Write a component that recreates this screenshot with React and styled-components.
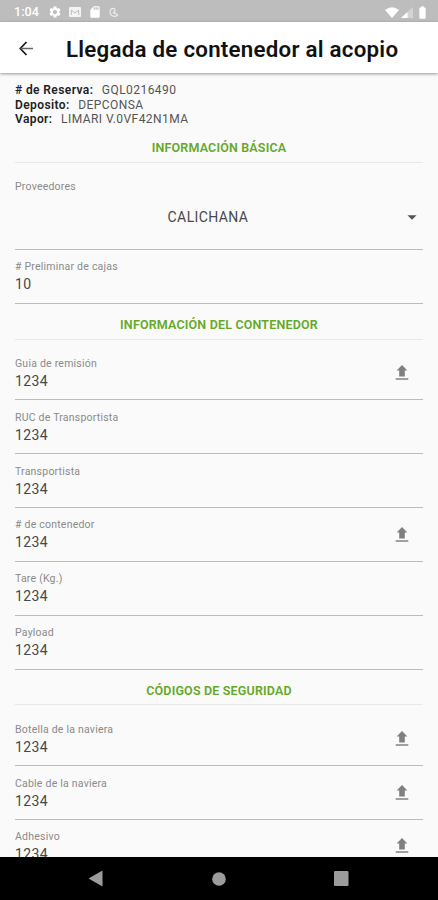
import React from "react";
import styled, { createGlobalStyle } from "styled-components";
import {
  MdArrowDropDown,
  MdBatteryFull,
  MdSdCard,
  MdSettings,
} from "react-icons/md";

const containerFields = [
  { label: "Guia de remisión", value: "1234", upload: true },
  { label: "RUC de Transportista", value: "1234" },
  { label: "Transportista", value: "1234" },
  { label: "# de contenedor", value: "1234", upload: true },
  { label: "Tare (Kg.)", value: "1234" },
  { label: "Payload", value: "1234" },
];

const securityFields = [
  { label: "Botella de la naviera", value: "1234", upload: true },
  { label: "Cable de la naviera", value: "1234", upload: true },
  { label: "Adhesivo", value: "1234", upload: true },
];

const UploadIcon = () => (
  <svg width="14" height="16" viewBox="0 0 14 16">
    <path d="M7 0L12.4 5.6H9.8V11.4H4.2V5.6H1.6Z" fill="#808080" />
    <path d="M0.7 13.2H13.3V14.8H0.7Z" fill="#8a8a8a" />
  </svg>
);

const TextField = ({ label, value, upload, first }) => (
  <Field $first={first}>
    <FieldText>
      <Label>{label}</Label>
      <Value>{value}</Value>
    </FieldText>
    {upload && (
      <UploadButton aria-label="upload">
        <UploadIcon />
      </UploadButton>
    )}
  </Field>
);

const App = () => {
  return (
    <Screen>
      <GlobalStyle />
      <StatusBar>
        <Clock>1:04</Clock>
        <StatusIcons>
          <MdSettings size={14} />
          <svg width="12" height="10" viewBox="0 0 12 10">
            <rect width="12" height="10" rx="1" fill="#f4f4f4" />
            <path
              d="M2.3 8V3L6 6L9.7 3V8"
              fill="none"
              stroke="#bdbdbd"
              strokeWidth="1"
            />
          </svg>
          <MdSdCard size={14} />
          <svg width="10" height="11" viewBox="0 0 10 11">
            <path
              d="M2.6 1.6A4.4 4.4 0 1 0 8.8 7.8M2.6 1.6Q6.4 0.8 6 4.2L4.4 5.6L8.8 7.8"
              fill="none"
              stroke="#eeeeee"
              strokeWidth="1.2"
            />
          </svg>
        </StatusIcons>
        <SystemIcons>
          <svg width="14" height="11" viewBox="0 0 14 11">
            <path d="M0 3Q7 -2.6 14 3L7 11Z" fill="#fff" />
          </svg>
          <svg width="12" height="11" viewBox="0 0 12 11">
            <path d="M12 0V11H0Z" fill="#d4d4d4" />
            <path d="M6.5 5V11H0Z" fill="#fff" />
          </svg>
          <MdBatteryFull size={15} />
        </SystemIcons>
      </StatusBar>

      <AppBar>
        <BackButton aria-label="back">
          <svg width="15" height="15" viewBox="0 0 15 15">
            <path
              d="M7.5 1L1.3 7.5L7.5 14"
              fill="none"
              stroke="#1c1c1c"
              strokeWidth="1.8"
            />
            <path d="M1.6 7.5H14" stroke="#666" strokeWidth="1.5" />
          </svg>
        </BackButton>
        <Title>Llegada de contenedor al acopio</Title>
      </AppBar>

      <Content>
        <Summary>
          <SummaryRow>
            <b># de Reserva:</b>
            <span>GQL0216490</span>
          </SummaryRow>
          <SummaryRow>
            <b>Deposito:</b>
            <span>DEPCONSA</span>
          </SummaryRow>
          <SummaryRow>
            <b>Vapor:</b>
            <span>LIMARI V.0VF42N1MA</span>
          </SummaryRow>
        </Summary>

        <SectionTitle>INFORMACIÓN BÁSICA</SectionTitle>
        <SelectField>
          <Label>Proveedores</Label>
          <SelectRow>
            <SelectValue>CALICHANA</SelectValue>
            <MdArrowDropDown size={22} />
          </SelectRow>
        </SelectField>
        <TextField label="# Preliminar de cajas" value="10" />

        <SectionTitle>INFORMACIÓN DEL CONTENEDOR</SectionTitle>
        {containerFields.map((field, i) => (
          <TextField key={field.label} {...field} first={i === 0} />
        ))}

        <SectionTitle>CÓDIGOS DE SEGURIDAD</SectionTitle>
        {securityFields.map((field, i) => (
          <TextField key={field.label} {...field} first={i === 0} />
        ))}
      </Content>

      <NavBar>
        <svg width="15" height="17" viewBox="0 0 15 17">
          <path d="M14.5 0.5V16.5L0.5 8.5Z" fill="#9c9c9c" />
        </svg>
        <svg width="14" height="14" viewBox="0 0 14 14">
          <circle cx="7" cy="7" r="6.8" fill="#9c9c9c" />
        </svg>
        <svg width="15" height="15" viewBox="0 0 15 15">
          <rect width="14.5" height="15" rx="1" fill="#9c9c9c" />
        </svg>
      </NavBar>
    </Screen>
  );
};

export default App;

const GlobalStyle = createGlobalStyle`
  * {
    box-sizing: border-box;
  }
  body {
    margin: 0;
    font-family: Roboto, "Liberation Sans", sans-serif;
    background: #fafafa;
  }
  svg {
    display: block;
    flex-shrink: 0;
  }
`;

const Screen = styled.div`
  display: flex;
  flex-direction: column;
  width: 438px;
  height: 900px;
  overflow: hidden;
  background: #fafafa;
`;

const StatusBar = styled.div`
  display: flex;
  align-items: center;
  flex-shrink: 0;
  height: 22px;
  padding: 2px 8px 0 14px;
  color: #fff;
  background: #bdbdbd;
`;

const Clock = styled.span`
  width: 34px;
  font-size: 12.6px;
  font-weight: 500;
  line-height: 20px;
`;

const StatusIcons = styled.div`
  display: flex;
  align-items: center;
  gap: 7px;
`;

const SystemIcons = styled.div`
  display: flex;
  align-items: center;
  gap: 2px;
  margin-left: auto;
`;

const AppBar = styled.header`
  display: flex;
  align-items: center;
  flex-shrink: 0;
  height: 51px;
  padding: 2px 19px 0;
  background: #fff;
  box-shadow: 0 1px 3px rgba(0, 0, 0, 0.4);
  z-index: 1;
`;

const BackButton = styled.button`
  width: 47px;
  padding: 0;
  border: none;
  background: none;
`;

const Title = styled.h1`
  margin: 0;
  color: #111;
  font-size: 22.3px;
  font-weight: 600;
  letter-spacing: 0.25px;
  line-height: 28px;
  white-space: nowrap;
`;

const Content = styled.main`
  flex: 1;
  min-height: 0;
  padding: 10.4px 15px 0;
  overflow: hidden;
`;

const Summary = styled.div`
  color: #555;
  font-size: 12px;
  letter-spacing: 0.45px;
  line-height: 14.5px;
`;

const SummaryRow = styled.div`
  display: flex;
  gap: 8.5px;

  b {
    color: #222;
    font-weight: 600;
    letter-spacing: 0.4px;
  }
`;

const SectionTitle = styled.h2`
  height: 35.7px;
  margin: 0;
  padding-top: 6px;
  border-bottom: 1px solid #e8e8e8;
  color: #64a827;
  font-size: 12.5px;
  font-weight: 600;
  letter-spacing: 0.17px;
  line-height: 30px;
  text-align: center;
`;

const Label = styled.div`
  color: #8a8a8a;
  font-size: 10.5px;
  letter-spacing: 0.22px;
  line-height: 16px;
`;

const Value = styled.div`
  color: #484848;
  font-size: 14px;
  letter-spacing: 0.4px;
  line-height: 18px;
`;

const SelectField = styled.div`
  height: 87.4px;
  padding-top: 16.4px;
  border-bottom: 1px solid #bcbcbc;
`;

const SelectRow = styled.div`
  display: flex;
  align-items: center;
  height: 44px;
  color: #555;
`;

const SelectValue = styled.span`
  flex: 1;
  color: #484848;
  font-size: 14px;
  letter-spacing: 0.4px;
  text-align: center;
`;

const Field = styled.div`
  display: flex;
  align-items: flex-end;
  justify-content: space-between;
  height: ${(props) => (props.$first ? "60.9px" : "53.85px")};
  border-bottom: 1px solid #bcbcbc;
`;

const FieldText = styled.div`
  padding-bottom: 9.5px;
`;

const UploadButton = styled.button`
  margin: 0 14px 18.4px 0;
  padding: 0;
  border: none;
  background: none;
`;

const NavBar = styled.nav`
  display: flex;
  align-items: center;
  justify-content: space-between;
  flex-shrink: 0;
  height: 43px;
  padding: 0 89px 0 88px;
  background: #000;
`;
